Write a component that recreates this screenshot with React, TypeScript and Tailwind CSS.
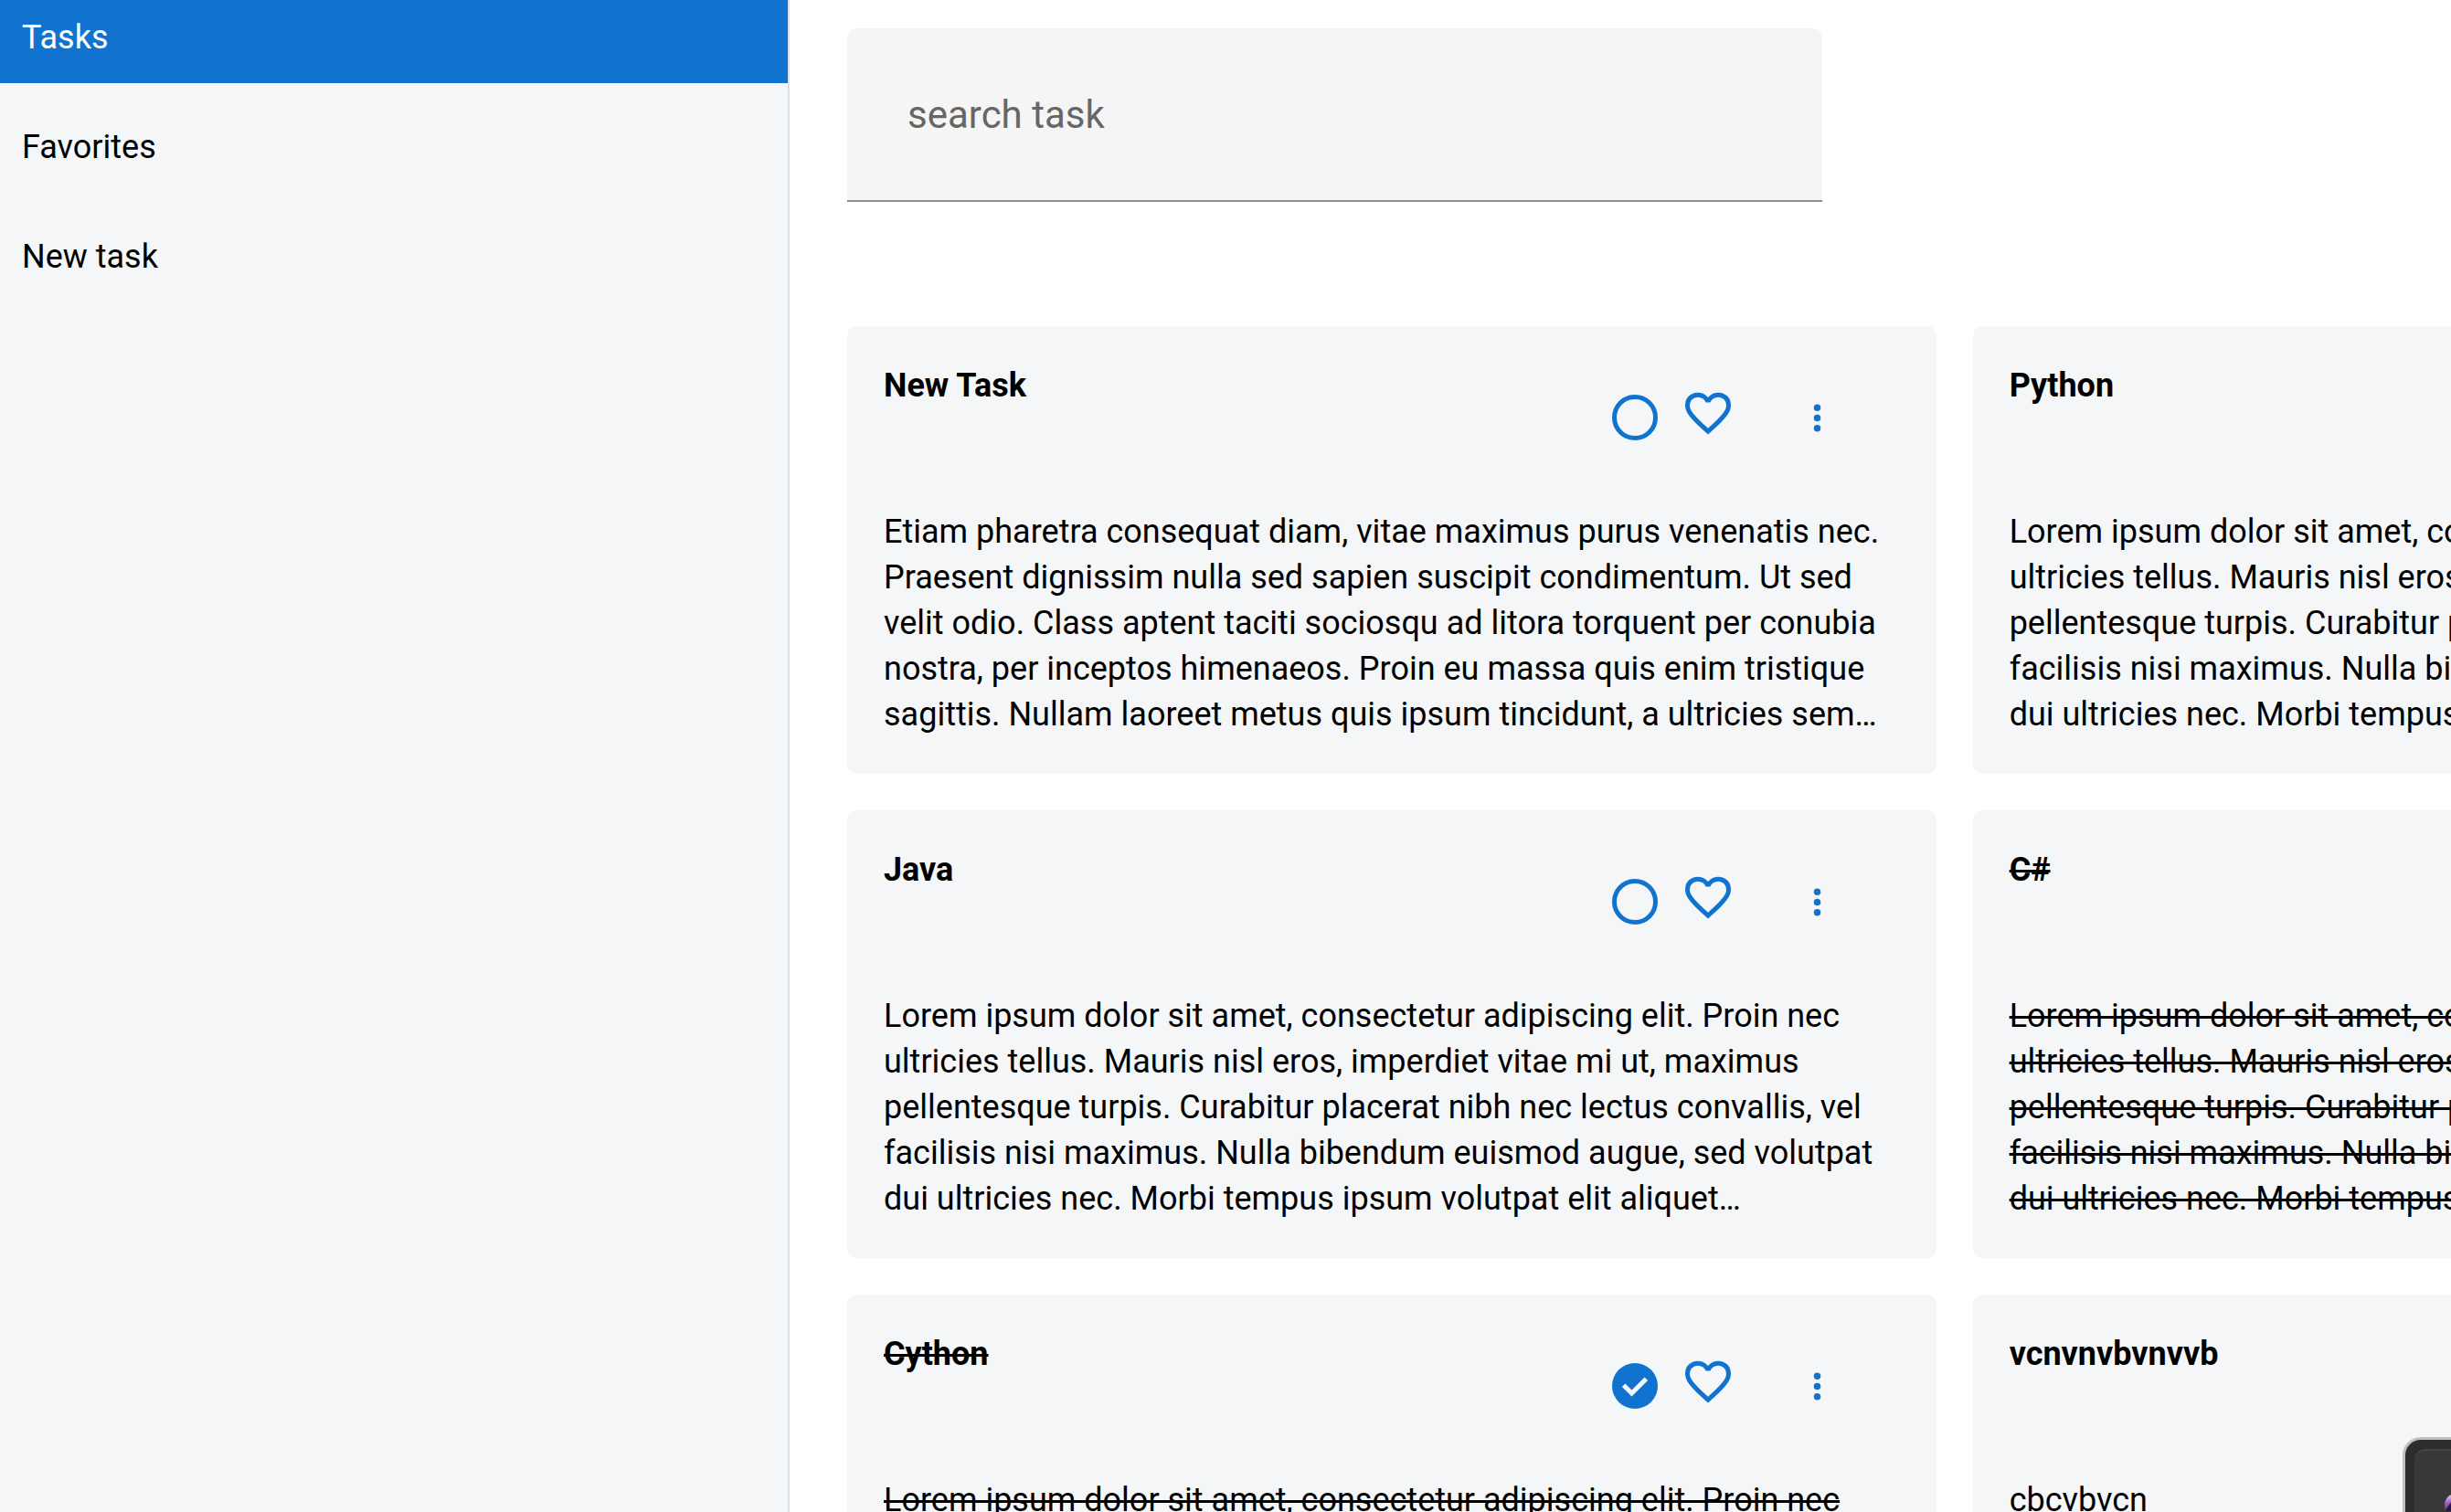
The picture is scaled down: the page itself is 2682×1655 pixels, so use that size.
const loremLines = [
  "Lorem ipsum dolor sit amet, consectetur adipiscing elit. Proin nec",
  "ultricies tellus. Mauris nisl eros, imperdiet vitae mi ut, maximus",
  "pellentesque turpis. Curabitur placerat nibh nec lectus convallis, vel",
  "facilisis nisi maximus. Nulla bibendum euismod augue, sed volutpat",
  "dui ultricies nec. Morbi tempus ipsum volutpat elit aliquet…",
];

const etiamLines = [
  "Etiam pharetra consequat diam, vitae maximus purus venenatis nec.",
  "Praesent dignissim nulla sed sapien suscipit condimentum. Ut sed",
  "velit odio. Class aptent taciti sociosqu ad litora torquent per conubia",
  "nostra, per inceptos himenaeos. Proin eu massa quis enim tristique",
  "sagittis. Nullam laoreet metus quis ipsum tincidunt, a ultricies sem…",
];

type Task = { title: string; lines: string[]; done: boolean };

const tasks: Task[] = [
  { title: "New Task", lines: etiamLines, done: false },
  { title: "Python", lines: loremLines, done: false },
  { title: "Java", lines: loremLines, done: false },
  { title: "C#", lines: loremLines, done: true },
  { title: "Cython", lines: loremLines, done: true },
  { title: "vcnvnvbvnvvb", lines: ["cbcvbvcn"], done: false },
];

function CircleIcon({ checked }: { checked: boolean }) {
  return (
    <svg viewBox="0 0 24 24" className="size-[60px]" fill="currentColor" aria-hidden="true">
      {checked ? (
        <path
          fillRule="evenodd"
          d="M12 2a10 10 0 1 0 0 20 10 10 0 0 0 0-20Zm-1.4 14.6 7.05-7.05-1.4-1.4-5.65 5.65-2.85-2.85-1.4 1.4Z"
        />
      ) : (
        <circle cx="12" cy="12" r="9" fill="none" stroke="currentColor" strokeWidth="2" />
      )}
    </svg>
  );
}

function HeartIcon() {
  return (
    <svg viewBox="0 0 24 24" className="size-[60px]" fill="currentColor" aria-hidden="true">
      <path d="m12 21-1.45-1.3q-2.525-2.275-4.175-3.925T3.75 12.812Q2.775 11.5 2.388 10.4T2 8.15Q2 5.8 3.575 4.225T7.5 2.65q1.3 0 2.475.55T12 4.75q.85-1 2.025-1.55T16.5 2.65q2.35 0 3.925 1.575T22 8.15q0 1.15-.387 2.25t-1.363 2.412q-.975 1.313-2.625 2.963T13.45 19.7L12 21Zm0-2.7q2.4-2.15 3.95-3.688t2.45-2.674q.9-1.138 1.25-2.026T20 8.15q0-1.5-1-2.5t-2.5-1q-1.175 0-2.175.662T12.95 7h-1.9q-.375-1.025-1.375-1.688T7.5 4.65q-1.5 0-2.5 1t-1 2.5q0 .875.35 1.763t1.25 2.025q.9 1.137 2.45 2.675T12 18.3Z" />
    </svg>
  );
}

function MoreIcon() {
  return (
    <svg viewBox="0 0 24 24" className="size-[45px]" fill="currentColor" aria-hidden="true">
      <circle cx="12" cy="6" r="2" />
      <circle cx="12" cy="12" r="2" />
      <circle cx="12" cy="18" r="2" />
    </svg>
  );
}

function TaskCard({ title, lines, done }: Task) {
  const strike = done ? "line-through decoration-[3px]" : "";
  return (
    <article className="rounded-[10px] bg-[#f4f6f8] p-10">
      <header className="flex h-40 items-start justify-between">
        <h2 className={`font-bold ${strike}`}>{title}</h2>
        <div className="mr-[30px] flex text-[#1173d0]">
          <button
            type="button"
            aria-label={done ? "Mark as not done" : "Mark as done"}
            className="flex h-[120px] w-20 items-center justify-center"
          >
            <CircleIcon checked={done} />
          </button>
          <button
            type="button"
            aria-label="Add to favorites"
            className="flex h-28 w-20 items-center justify-center"
          >
            <HeartIcon />
          </button>
          <button
            type="button"
            aria-label="More options"
            className="ml-5 flex size-[120px] items-center justify-center"
          >
            <MoreIcon />
          </button>
        </div>
      </header>
      <p className={`min-h-[250px] ${strike}`}>
        {lines.map((line) => (
          <span key={line} className="block whitespace-nowrap">
            {line}
          </span>
        ))}
      </p>
    </article>
  );
}

function Sidebar() {
  return (
    <nav className="w-[864px] shrink-0 border-r-2 border-[#dbe1e5] bg-[#f4f6f8]">
      <a href="#tasks" aria-current="page" className="block bg-[#1173d0] px-6 pt-4 pb-[25px] text-white">
        Tasks
      </a>
      <a href="#favorites" className="block px-6 pt-[45px] pb-[25px]">
        Favorites
      </a>
      <a href="#new" className="block px-6 pt-[45px] pb-[25px]">
        New task
      </a>
    </nav>
  );
}

function DockCorner() {
  return (
    <div className="absolute right-0 bottom-0 h-[82px] w-[53px] overflow-hidden rounded-tl-[20px] border-t-[3px] border-l-[3px] border-[#bdbfc0] bg-[#2b2e2d] pt-[10px] pl-[10px]">
      <div className="flex h-full items-end justify-end rounded-tl-[12px] border-t-2 border-[#444444] bg-[#383838]">
        <svg viewBox="0 0 8 20" className="h-5 w-2" aria-hidden="true">
          <defs>
            <linearGradient id="petal" x1="0" y1="0" x2="0" y2="1">
              <stop offset="0" stopColor="#d9cfe6" />
              <stop offset="0.45" stopColor="#a765d6" />
              <stop offset="1" stopColor="#5a2494" />
            </linearGradient>
          </defs>
          <path d="M8 1Q2 4 1 11v8L8 9Z" fill="url(#petal)" />
          <path d="M8 10 2 19h6Z" fill="#2a1740" />
        </svg>
      </div>
    </div>
  );
}

export default function App() {
  return (
    <div className="relative flex h-screen overflow-hidden bg-white font-[Roboto,sans-serif] text-[36px] leading-[50px] text-black">
      <Sidebar />
      <main className="min-w-0 flex-1 pt-[31px] pl-[63px]">
        <input
          type="search"
          aria-label="search task"
          placeholder="search task"
          className="block h-[190px] w-[60.8%] rounded-t-[10px] border-b-2 border-[#8d8d8d] bg-[#f5f5f5] px-[66px] text-[42px] placeholder:text-[#666666]"
        />
        <section className="mt-[136px] grid grid-cols-[67.9%_67.9%] gap-10">
          {tasks.map((task) => (
            <TaskCard key={task.title} {...task} />
          ))}
        </section>
      </main>
      <DockCorner />
    </div>
  );
}
